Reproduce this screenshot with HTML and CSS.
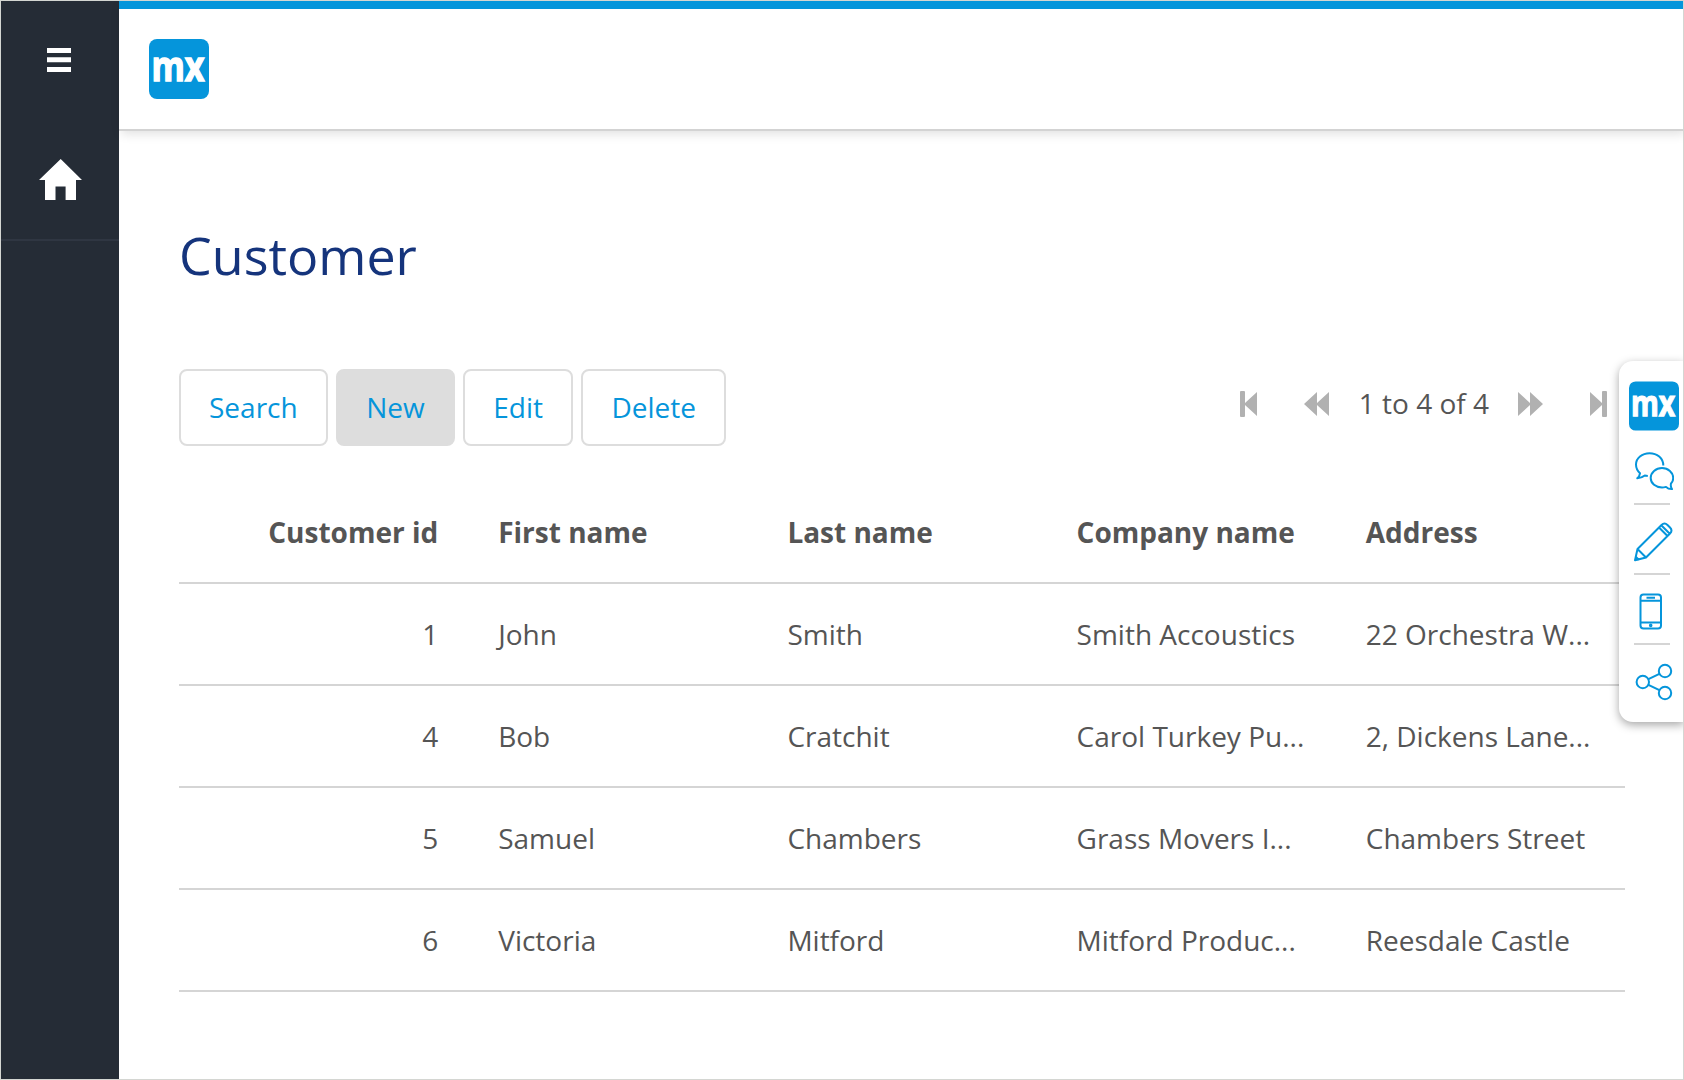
FILE: index.html
```html
<!DOCTYPE html>
<html lang="en">
<head>
<meta charset="utf-8">
<title>Customer</title>
<link rel="stylesheet" href="styles.css">
</head>
<body>
<div class="app">
  <nav class="sidebar">
    <div class="toggle"><svg width="24" height="24" viewBox="0 0 24 24" fill="#fff"><path d="M0 0h24v5H0zM0 9.3h24v5H0zM0 19h24v5H0z"/></svg></div>
    <div class="home"><svg width="43" height="41" viewBox="0 0 43 41" fill="#fff"><path d="M21.7 0 43 21h-6v20H26.600V27.500H16.500V41H6V21H0z"/></svg></div>
  </nav>
  <div class="page">
    <header class="topbar">
      <svg class="logo" width="60" height="60" viewBox="0 0 60 60"><rect width="60" height="60" rx="8" fill="#0595db"/><text x="2.500" y="41.700" textLength="53" lengthAdjust="spacingAndGlyphs">mx</text></svg>
    </header>
    <main class="content">
      <h1>Customer</h1>
      <div class="controls">
        <div class="buttons">
          <button>Search</button><button class="active">New</button><button>Edit</button><button>Delete</button>
        </div>
        <div class="paging">
          <svg width="17" height="26" viewBox="0 0 17 26"><path d="M1 0h3q1 0 1 1v11L17 1v24L5 14v11q0 1-1 1H1q-1 0-1-1V1q0-1 1-1z"/></svg>
          <svg width="25" height="26" viewBox="0 0 25 26"><path d="M0 13 13 1v11L25 1v24L13 14v11z"/></svg>
          <span>1 to 4 of 4</span>
          <svg width="25" height="26" viewBox="0 0 25 26"><path d="M25 13 12 1v11L0 1v24l12-11v11z"/></svg>
          <svg width="17" height="26" viewBox="0 0 17 26"><path d="M16 0h-3q-1 0-1 1v11L0 1v24l12-11v11q0 1 1 1h3q1 0 1-1V1q0-1-1-1z"/></svg>
        </div>
      </div>
      <table>
        <thead><tr><th class="num">Customer id</th><th>First name</th><th>Last name</th><th>Company name</th><th>Address</th></tr></thead>
        <tbody>
          <tr><td class="num">1</td><td>John</td><td>Smith</td><td>Smith Accoustics</td><td>22 Orchestra W...</td></tr>
          <tr><td class="num">4</td><td>Bob</td><td>Cratchit</td><td>Carol Turkey Pu...</td><td>2, Dickens Lane...</td></tr>
          <tr><td class="num">5</td><td>Samuel</td><td>Chambers</td><td>Grass Movers I...</td><td>Chambers Street</td></tr>
          <tr><td class="num">6</td><td>Victoria</td><td>Mitford</td><td>Mitford Produc...</td><td>Reesdale Castle</td></tr>
        </tbody>
      </table>
    </main>
  </div>
  <aside class="feedback">
    <svg class="logo" width="50" height="50" viewBox="0 0 60 60"><rect y="0.500" width="60" height="59" rx="8" fill="#0595db"/><text x="2.500" y="41.700" textLength="53" lengthAdjust="spacingAndGlyphs">mx</text></svg>
    <div class="tool chat"><svg width="40" height="40" viewBox="0 0 40 40"><path d="M29.300 14.500C29.300 7 23 2.200 15.500 2.200 8 2.200 2 7.500 2 13.500c0 4 1.600 6.500 4 8.800-.3 2-1 3.500-2.700 5 3.400-.2 5.500-1.200 7.500-2.800l3 .4M37 32.500c1.500-1.500 2.200-3.500 2.200-5.500 0-5.500-5-10-11.200-10s-11.300 4.500-11.300 10S21.800 36.500 28 36.500c1.500 0 2.500-.2 4-.6 1.500 1.600 3.500 2.300 6 2.200-1-1.500-1.500-3.600-1-5.600z"/></svg></div>
    <div class="tool"><svg width="40" height="40" viewBox="0 0 40 40"><path d="M1 38.200 3.500 27 27.500 3q3-3 6 0l2.500 2.500q3 3 0 6L12 35.500zM3.500 27l8.500 8.500M25 5.500l8.500 8.500M27.500 3.500l8 8M1.500 34.500l3.500 3.500"/></svg></div>
    <div class="tool"><svg width="40" height="40" viewBox="0 0 40 40"><rect x="6.500" y="2.500" width="20.500" height="34" rx="3"/><path d="M6.500 8.800H27M6.500 30.500H27M12.500 5.700h8.500"/><circle cx="16.700" cy="33.400" r=".8"/></svg></div>
    <div class="tool"><svg width="40" height="40" viewBox="0 0 40 40"><circle cx="8.800" cy="20" r="6.200"/><circle cx="31" cy="9" r="6.200"/><circle cx="31" cy="31" r="6.200"/><path d="m14.400 17.200 11-5.400M14.400 22.800l11 5.400"/></svg></div>
  </aside>
</div>
</body>
</html>
```
FILE: styles.css
```css
* { box-sizing: border-box; }
body { margin: 0; font: 28px/40px "Open Sans", sans-serif; color: #555; }
svg { display: block; }
.app { position: relative; display: flex; height: 1080px; border: 1px solid #d4d6d2; overflow: hidden; background: #fff; }
.sidebar { width: 118px; background: #252c36; }
.toggle { height: 119px; padding: 47px 0 0 46px; }
.home { height: 121px; padding: 39px 0 0 38px; border-bottom: 2px solid #2f3642; }
.page { flex: 1; }
.topbar { height: 130px; padding: 30px; border-top: 8px solid #0595db; border-bottom: 2px solid #d3d3d3; box-shadow: 2px 3px 10px rgba(0,0,0,.12); }
.logo { overflow: visible; }
.logo text { font: 700 42px "Open Sans", sans-serif; fill: #fff; stroke: #fff; stroke-width: 1.5px; }
.content { padding: 88px 57px 0 60px; }
h1 { margin: 0; font-size: 52px; font-weight: 400; line-height: 72px; color: #15347c; }
.controls { display: flex; justify-content: space-between; margin-top: 78px; }
.buttons { display: flex; gap: 8.5px; }
button { height: 77px; padding: 0 28px 1px; border: 2px solid #ddd; border-radius: 8px; background: #fff; color: #0595db; font: inherit; }
.active { background: #ddd; }
.paging { display: flex; align-items: center; height: 68px; padding-right: 19px; fill: #b1b1b1; }
.paging svg { margin-top: 1px; }
.paging svg:nth-child(2) { margin-left: 47px; }
.paging span { margin: 0 29px 0 30px; white-space: nowrap; }
.paging svg:last-child { margin-left: 47px; }
table { width: 1446px; margin-top: 36px; border-collapse: separate; border-spacing: 0; table-layout: fixed; }
th, td { height: 102px; padding: 0 30px; text-align: left; border-bottom: 2px solid #d5d5d5; white-space: nowrap; }
th { font-weight: 700; }
.num { text-align: right; }
.feedback { position: absolute; top: 360px; right: -1px; width: 65px; height: 361px; padding: 20px 5px 0 10px; border-right: 1px solid #d5d5d5; border-radius: 14px 0 0 14px; background: #fff; box-shadow: 0 3px 10px rgba(0,0,0,.35); }
.feedback .logo { margin-bottom: 4px; }
.tool { width: 36px; height: 70px; margin-left: 5px; padding-top: 17px; border-bottom: 2px solid #d5d5d5; }
.chat { padding-top: 16px; }
.tool:last-child { border: 0; }
.tool svg { fill: none; stroke: #0595db; stroke-width: 2; stroke-linejoin: round; }
```
